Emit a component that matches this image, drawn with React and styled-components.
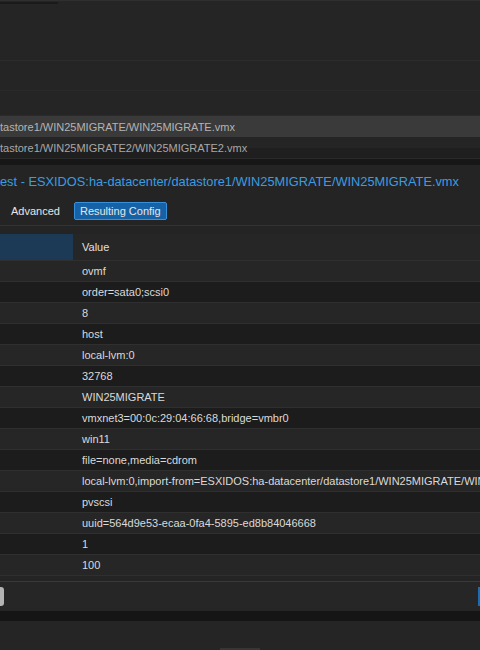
import React from 'react'
import styled, { createGlobalStyle } from 'styled-components'

const GlobalStyle = createGlobalStyle`
  html, body {
    margin: 0;
    padding: 0;
    background: #252525;
    font-family: "Liberation Sans", Arial, sans-serif;
    overflow: hidden;
  }
`

const rows = [
  'ovmf',
  'order=sata0;scsi0',
  '8',
  'host',
  'local-lvm:0',
  '32768',
  'WIN25MIGRATE',
  'vmxnet3=00:0c:29:04:66:68,bridge=vmbr0',
  'win11',
  'file=none,media=cdrom',
  'local-lvm:0,import-from=ESXIDOS:ha-datacenter/datastore1/WIN25MIGRATE/WIN25MIGRATE.vmdk',
  'pvscsi',
  'uuid=564d9e53-ecaa-0fa4-5895-ed8b84046668',
  '1',
  '100',
]

const App = () => {
  return (
    <Page>
      <GlobalStyle />
      <TopBar>
        <TopTab />
      </TopBar>
      <Blank />
      <ListRow $h={30} />
      <ListRow $h={25} />
      <FileRow $selected>tastore1/WIN25MIGRATE/WIN25MIGRATE.vmx</FileRow>
      <FileRow>tastore1/WIN25MIGRATE2/WIN25MIGRATE2.vmx</FileRow>
      <Shade />
      <Modal>
        <Title>est - ESXIDOS:ha-datacenter/datastore1/WIN25MIGRATE/WIN25MIGRATE.vmx</Title>
        <Tabs>
          <Tab>Advanced</Tab>
          <Tab $active>Resulting Config</Tab>
        </Tabs>
        <Grid>
          <HeadRow>
            <KeyHead />
            <ValueHead>Value</ValueHead>
          </HeadRow>
          {rows.map((v, i) => (
            <BodyRow key={i} $alt={i % 2 === 1}>
              <KeyCell />
              <ValueCell>{v}</ValueCell>
            </BodyRow>
          ))}
        </Grid>
        <Footer>
          <GreyButton />
          <BlueButton />
        </Footer>
      </Modal>
      <ModalShadow />
      <Bottom>
        <Handle />
      </Bottom>
    </Page>
  )
}

const Page = styled.div`
  width: 480px;
  height: 650px;
  display: flex;
  flex-direction: column;
  overflow: hidden;
  background: #252525;
`

const TopBar = styled.div`
  height: 3px;
  border-top: 1px solid #2f2f2f;
  flex-shrink: 0;
`

const TopTab = styled.div`
  width: 58px;
  height: 2px;
  margin-top: 1px;
  background: #1a1a1a;
`

const Blank = styled.div`
  height: 56px;
  flex-shrink: 0;
  border-bottom: 1px solid #2c2c2c;
`

const ListRow = styled.div`
  height: ${p => p.$h - 1}px;
  flex-shrink: 0;
  border-bottom: 1px solid #2a2a2a;
`

const FileRow = styled.div`
  height: 21px;
  flex-shrink: 0;
  display: flex;
  align-items: center;
  font-size: 11px;
  color: ${p => (p.$selected ? '#b4b4b4' : '#a8a8a8')};
  white-space: nowrap;
  background: ${p =>
    p.$selected
      ? '#3a3a3a'
      : 'linear-gradient(to bottom, #252525 0, #252525 11px, #1f1f1f 11px)'};
`

const Shade = styled.div`
  height: 6px;
  flex-shrink: 0;
  border-top: 1px solid #2a2a2a;
  background: #171717;
`

const Modal = styled.div`
  flex-shrink: 0;
  background: #242424;
  display: flex;
  flex-direction: column;
`

const Title = styled.div`
  height: 32px;
  display: flex;
  align-items: center;
  font-size: 12.8px;
  color: #3a9de2;
  white-space: nowrap;
`

const Tabs = styled.div`
  height: 28px;
  display: flex;
  align-items: center;
  gap: 10px;
  padding-left: 7px;
  border-bottom: 1px solid #343434;
`

const Tab = styled.div`
  height: 16px;
  padding: 0 ${p => (p.$active ? '5px' : '3px')};
  display: flex;
  align-items: center;
  font-size: 11px;
  color: #e6e6e6;
  border: 1px solid ${p => (p.$active ? '#3a8fd9' : 'transparent')};
  border-radius: 2px;
  background: ${p => (p.$active ? '#1562a6' : 'transparent')};
`

const Grid = styled.div`
  margin-top: 8px;
  display: flex;
  flex-direction: column;
`

const HeadRow = styled.div`
  height: 26px;
  display: flex;
  background: #262626;
  border-bottom: 1px solid #2f2f2f;
`

const KeyHead = styled.div`
  width: 73px;
  background: #1c3a55;
`

const ValueHead = styled.div`
  flex: 1;
  display: flex;
  align-items: center;
  padding-left: 9px;
  font-size: 11px;
  color: #e0e0e0;
`

const BodyRow = styled.div`
  height: 20px;
  display: flex;
  background: ${p => (p.$alt ? '#1c1c1c' : '#262626')};
  border-bottom: 1px solid #2f2f2f;
`

const KeyCell = styled.div`
  width: 73px;
  flex-shrink: 0;
`

const ValueCell = styled.div`
  flex: 1;
  display: flex;
  align-items: center;
  padding-left: 9px;
  font-size: 11px;
  color: #dadada;
  white-space: nowrap;
  overflow: hidden;
`

const Footer = styled.div`
  margin-top: 5px;
  height: 29px;
  border-top: 1px solid #3a3a3a;
  background: #262626;
  display: flex;
  align-items: center;
  justify-content: space-between;
`

const GreyButton = styled.div`
  width: 4px;
  height: 19px;
  background: #b3b3b3;
  border-radius: 0 3px 3px 0;
`

const BlueButton = styled.div`
  width: 2px;
  height: 19px;
  background: #1a6db5;
`

const ModalShadow = styled.div`
  height: 10px;
  flex-shrink: 0;
  background: #151515;
`

const Bottom = styled.div`
  flex: 1;
  display: flex;
  align-items: flex-end;
  padding-left: 220px;
`

const Handle = styled.div`
  width: 40px;
  height: 2px;
  background: #363636;
`

export default App
